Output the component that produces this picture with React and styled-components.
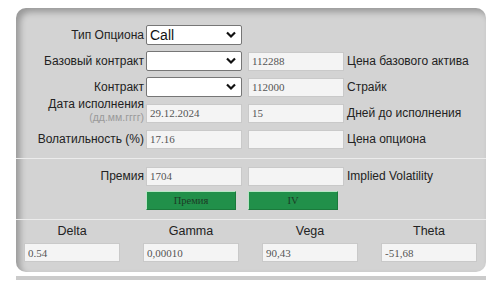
import styled, { createGlobalStyle } from "styled-components";

const GlobalStyle = createGlobalStyle`
  body {
    margin: 0;
    padding: 8px 16px;
    background: #ffffff;
    font-family: "Liberation Sans", Arial, sans-serif;
  }
`;

const Panel = styled.div`
  width: 470px;
  background: #d3d3d3;
  border-radius: 10px;
  box-shadow: inset 4px 4px 6px rgba(0, 0, 0, 0.28);
  overflow: hidden;
`;

const Section = styled.div`
  padding: ${(p) => p.$pad};
  border-top: ${(p) => (p.$line ? "1px solid #ececec" : "none")};
`;

const Row = styled.div`
  display: grid;
  grid-template-columns: 130px 102px 99px 1fr;
  align-items: center;
  height: 20px;
  margin-bottom: ${(p) => p.$gap ?? 6}px;
`;

const Label = styled.div`
  text-align: right;
  padding-right: 2px;
  font-size: 12px;
  color: #222;
  white-space: nowrap;
`;

const SideLabel = styled.div`
  font-size: 12px;
  color: #222;
  white-space: nowrap;
`;

const DateLabel = styled(Label)`
  line-height: 13px;
  margin-top: -5px;
`;

const Hint = styled.div`
  font-size: 10.5px;
  line-height: 12px;
  color: #9a9a9a;
`;

const SelectWrap = styled.div`
  position: relative;
  width: 96px;
  height: 20px;
`;

const Select = styled.select`
  appearance: none;
  width: 96px;
  height: 20px;
  box-sizing: border-box;
  border: 1px solid #767676;
  border-radius: 2px;
  background: #fff;
  font-family: "Liberation Sans", Arial, sans-serif;
  font-size: 14px;
  color: #111;
  padding: 0 3px;
  margin: 0;
`;

const Chevron = styled.svg`
  position: absolute;
  right: 6px;
  top: 6px;
  pointer-events: none;
`;

const Input = styled.input`
  width: 96px;
  height: 19px;
  box-sizing: border-box;
  border: 1px solid #c9c9c9;
  background: #f4f4f4;
  font-family: "Liberation Serif", "Times New Roman", serif;
  font-size: 11px;
  color: #555;
  padding: 0 3px;
  margin: 0;
  outline: none;
`;

const Button = styled.button`
  width: 90px;
  height: 19px;
  box-sizing: border-box;
  border: none;
  border-top: 1px solid #b9e6c6;
  border-left: 1px solid #b9e6c6;
  border-right: 1px solid #1b7a3c;
  border-bottom: 1px solid #1b7a3c;
  background: #21904a;
  font-family: "Liberation Serif", "Times New Roman", serif;
  font-size: 10.5px;
  color: #1d3b26;
  padding: 0;
  margin: 0;
`;

const Greeks = styled.div`
  display: grid;
  grid-template-columns: repeat(4, 96px);
  column-gap: 23px;
  padding-left: 8px;
`;

const Greek = styled.div`
  display: flex;
  flex-direction: column;
  align-items: center;
  gap: 3px;
`;

const GreekName = styled.div`
  font-size: 12.5px;
  color: #222;
  line-height: 18px;
`;

const Strip = styled.div`
  width: 470px;
  height: 4px;
  margin-top: 4px;
  background: #cbcbcb;
`;

const Dropdown = ({ value }) => (
  <SelectWrap>
    <Select defaultValue={value}>
      <option value={value}>{value}</option>
    </Select>
    <Chevron width="10" height="8" viewBox="0 0 10 8">
      <path d="M1 1.5 L5 5.5 L9 1.5" fill="none" stroke="#111" strokeWidth="2.2" />
    </Chevron>
  </SelectWrap>
);

const greeks = [
  ["Delta", "0.54"],
  ["Gamma", "0,00010"],
  ["Vega", "90,43"],
  ["Theta", "-51,68"],
];

export default function App() {
  return (
    <>
      <GlobalStyle />
      <Panel>
        <Section $pad="17px 0 3px">
          <Row>
            <Label>Тип Опциона</Label>
            <Dropdown value="Call" />
          </Row>
          <Row>
            <Label>Базовый контракт</Label>
            <Dropdown value="" />
            <Input defaultValue="112288" />
            <SideLabel>Цена базового актива</SideLabel>
          </Row>
          <Row>
            <Label>Контракт</Label>
            <Dropdown value="" />
            <Input defaultValue="112000" />
            <SideLabel>Страйк</SideLabel>
          </Row>
          <Row>
            <DateLabel>
              Дата исполнения
              <Hint>(дд.мм.гггг)</Hint>
            </DateLabel>
            <Input defaultValue="29.12.2024" />
            <Input defaultValue="15" />
            <SideLabel>Дней до исполнения</SideLabel>
          </Row>
          <Row>
            <Label>Волатильность (%)</Label>
            <Input defaultValue="17.16" />
            <Input defaultValue="" />
            <SideLabel>Цена опциона</SideLabel>
          </Row>
        </Section>
        <Section $line $pad="7px 0 9px">
          <Row $gap={4}>
            <Label>Премия</Label>
            <Input defaultValue="1704" />
            <Input defaultValue="" />
            <SideLabel>Implied Volatility</SideLabel>
          </Row>
          <Row $gap={0}>
            <span />
            <Button>Премия</Button>
            <Button>IV</Button>
          </Row>
        </Section>
        <Section $line $pad="2px 0 10px">
          <Greeks>
            {greeks.map(([name, val]) => (
              <Greek key={name}>
                <GreekName>{name}</GreekName>
                <Input defaultValue={val} />
              </Greek>
            ))}
          </Greeks>
        </Section>
      </Panel>
      <Strip />
    </>
  );
}
